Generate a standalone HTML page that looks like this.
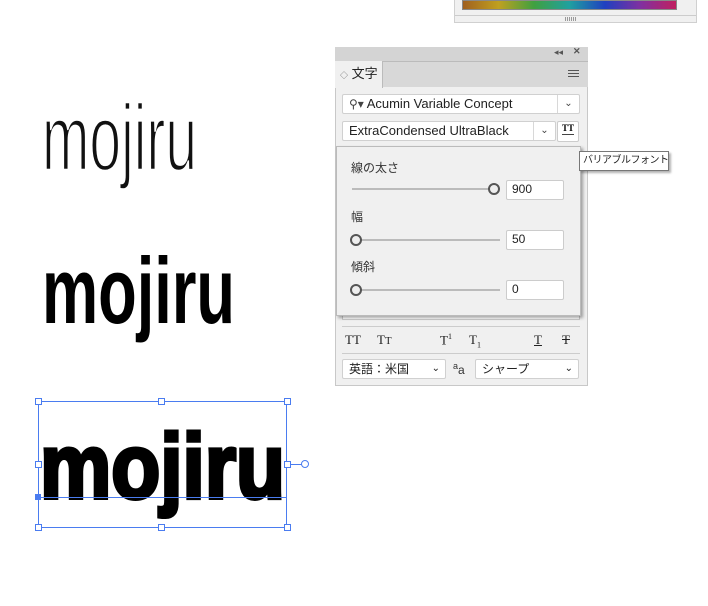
<!DOCTYPE html>
<html><head><meta charset="utf-8"><style>
*{box-sizing:border-box;margin:0;padding:0}
body{width:708px;height:606px;background:#fff;position:relative;overflow:hidden;font-family:"Liberation Sans","Noto Sans CJK JP",sans-serif}
.a{position:absolute}
.dd{position:absolute;background:#fff;border:1px solid #d0d0d0;border-radius:2px;font-size:13px;color:#222;line-height:18px;padding-left:6px;white-space:nowrap}
.dd .c{position:absolute;right:0;top:0;width:22px;height:18px;border-left:1px solid #d8d8d8;text-align:center;font-size:10px;color:#444}
.in{position:absolute;background:#fff;border:1px solid #ccc;border-radius:2px;font-size:12px;line-height:17px;padding-left:5px;color:#222;width:58px;height:20px}
.lbl{position:absolute;font-size:12px;color:#333}
.sl{position:absolute;height:2px;background:#bbb}
.kn{position:absolute;width:12px;height:12px;border:2px solid #555;border-radius:50%;background:#eee}
.h{position:absolute;width:7px;height:7px;border:1px solid #4a7cf0;background:#fff}
</style></head><body>
<div class="a" style="left:454px;top:0;width:243px;height:23px;background:#f0f0f0;border:1px solid #d0d0d0;border-top:none"></div>
<div class="a" style="left:462px;top:0;width:215px;height:10px;border:1px solid #888;background:linear-gradient(to right,#a06020,#c0a020,#40a040,#20a0a0,#2040c0,#8030a0,#c02060)"></div>
<div class="a" style="left:455px;top:15px;width:241px;height:1px;background:#ccc"></div>
<div class="a" style="left:565px;top:17px;width:12px;height:4px;background:repeating-linear-gradient(to right,#999 0 1px,transparent 1px 2px)"></div>

<svg class="a" style="left:0;top:0" width="708" height="606">
<text x="42" y="170" font-family="Liberation Sans" font-size="94" textLength="155" lengthAdjust="spacingAndGlyphs" fill="#111" stroke="#fff" stroke-width="2.5">mojiru</text>
<text x="42" y="323" font-family="Liberation Sans" font-weight="bold" font-size="94" textLength="193" lengthAdjust="spacingAndGlyphs" fill="#000">mojiru</text>
<text x="40" y="498" font-family="Liberation Sans" font-weight="bold" font-size="92" textLength="245" lengthAdjust="spacingAndGlyphs" fill="#000" stroke="#000" stroke-width="4">mojiru</text>
</svg>

<div class="a" style="left:38px;top:401px;width:249px;height:127px;border:1px solid #4a7cf0"></div>
<div class="a" style="left:38px;top:497px;width:249px;height:1px;background:#4a7cf0"></div>
<div class="a" style="left:287px;top:464px;width:15px;height:1px;background:#4a7cf0"></div>
<div class="a" style="left:301px;top:460px;width:8px;height:8px;border:1px solid #4a7cf0;border-radius:50%;background:#fff"></div>
<div class="h" style="left:35px;top:398px"></div><div class="h" style="left:158px;top:398px"></div><div class="h" style="left:284px;top:398px"></div>
<div class="h" style="left:35px;top:461px"></div><div class="h" style="left:284px;top:461px"></div>
<div class="h" style="left:35px;top:524px"></div><div class="h" style="left:158px;top:524px"></div><div class="h" style="left:284px;top:524px"></div>
<div class="a" style="left:35px;top:494px;width:6px;height:6px;background:#4a7cf0"></div>

<div class="a" style="left:335px;top:47px;width:253px;height:339px;background:#f0f0f0;border:1px solid #c8c8c8;border-top:none"></div>
<div class="a" style="left:335px;top:47px;width:253px;height:14px;background:#d4d4d4;font-size:9px;color:#555"><span class="a" style="left:219px;top:0">◂◂</span><span class="a" style="left:238px;top:-1px;font-weight:bold">✕</span></div>
<div class="a" style="left:335px;top:61px;width:253px;height:26px;background:#d8d8d8;border-top:1px solid #bbb"></div>
<div class="a" style="left:335px;top:61px;width:48px;height:27px;background:#f0f0f0;border-right:1px solid #bbb;font-size:13px;color:#222;line-height:26px;padding-left:5px"><span style="font-size:8px;color:#666">◇</span> 文字</div>
<div class="a" style="left:568px;top:70px;width:11px;height:7px;border-top:1px solid #555;border-bottom:1px solid #555"><div style="margin-top:2px;height:1px;background:#555"></div></div>

<div class="dd" style="left:342px;top:94px;width:238px;height:20px"><span style="font-size:12px;color:#444">⚲▾</span> Acumin Variable Concept<div class="c">⌄</div></div>
<div class="dd" style="left:342px;top:121px;width:214px;height:20px">ExtraCondensed UltraBlack<div class="c">⌄</div></div>
<div class="a" style="left:557px;top:121px;width:22px;height:21px;background:#fff;border:1px solid #ccc;border-radius:2px;font-size:9px;font-weight:bold;text-align:center;line-height:12px;font-family:'Liberation Serif',serif">TT<div style="margin:0 4px;height:1px;background:#444"></div></div>

<div class="a" style="left:342px;top:306px;width:238px;height:14px;border:1px solid #ccc;background:#fff"></div>
<div class="a" style="left:342px;top:326px;width:238px;height:1px;background:#ccc"></div>
<div class="a" style="left:345px;top:332px;width:235px;font-family:'Liberation Serif',serif;font-size:13px;color:#222">
<span class="a" style="left:0">TT</span><span class="a" style="left:32px">T<small>T</small></span><span class="a" style="left:95px">T<sup style="font-size:8px">1</sup></span><span class="a" style="left:124px">T<sub style="font-size:8px">1</sub></span><span class="a" style="left:189px;text-decoration:underline">T</span><span class="a" style="left:217px;text-decoration:line-through">T</span></div>
<div class="a" style="left:342px;top:353px;width:238px;height:1px;background:#ccc"></div>
<div class="dd" style="left:342px;top:359px;width:104px;height:20px;font-size:12px">英語：米国<span class="a" style="right:5px;top:0;font-size:10px">⌄</span></div>
<div class="a" style="left:453px;top:361px;font-size:12px;color:#333"><sup style="font-size:9px">a</sup>a</div>
<div class="dd" style="left:475px;top:359px;width:104px;height:20px;font-size:12px">シャープ<span class="a" style="right:5px;top:0;font-size:10px">⌄</span></div>

<div class="a" style="left:336px;top:146px;width:245px;height:170px;background:#f0f0f0;border:1px solid #bbb;box-shadow:2px 2px 3px rgba(0,0,0,.35)"></div>
<div class="lbl" style="left:351px;top:159px">線の太さ</div>
<div class="sl" style="left:352px;top:188px;width:138px"></div><div class="kn" style="left:488px;top:183px"></div>
<div class="in" style="left:506px;top:180px">900</div>
<div class="lbl" style="left:351px;top:208px">幅</div>
<div class="sl" style="left:360px;top:239px;width:140px"></div><div class="kn" style="left:350px;top:234px"></div>
<div class="in" style="left:506px;top:230px">50</div>
<div class="lbl" style="left:351px;top:258px">傾斜</div>
<div class="sl" style="left:360px;top:289px;width:140px"></div><div class="kn" style="left:350px;top:284px"></div>
<div class="in" style="left:506px;top:280px">0</div>

<div class="a" style="left:579px;top:151px;width:90px;height:20px;background:#fff;border:1px solid #777;font-size:10px;line-height:18px;padding-left:3px;color:#222;white-space:nowrap;letter-spacing:-0.5px;box-shadow:2px 2px 2px rgba(0,0,0,.3)">バリアブルフォント</div>
</body></html>
